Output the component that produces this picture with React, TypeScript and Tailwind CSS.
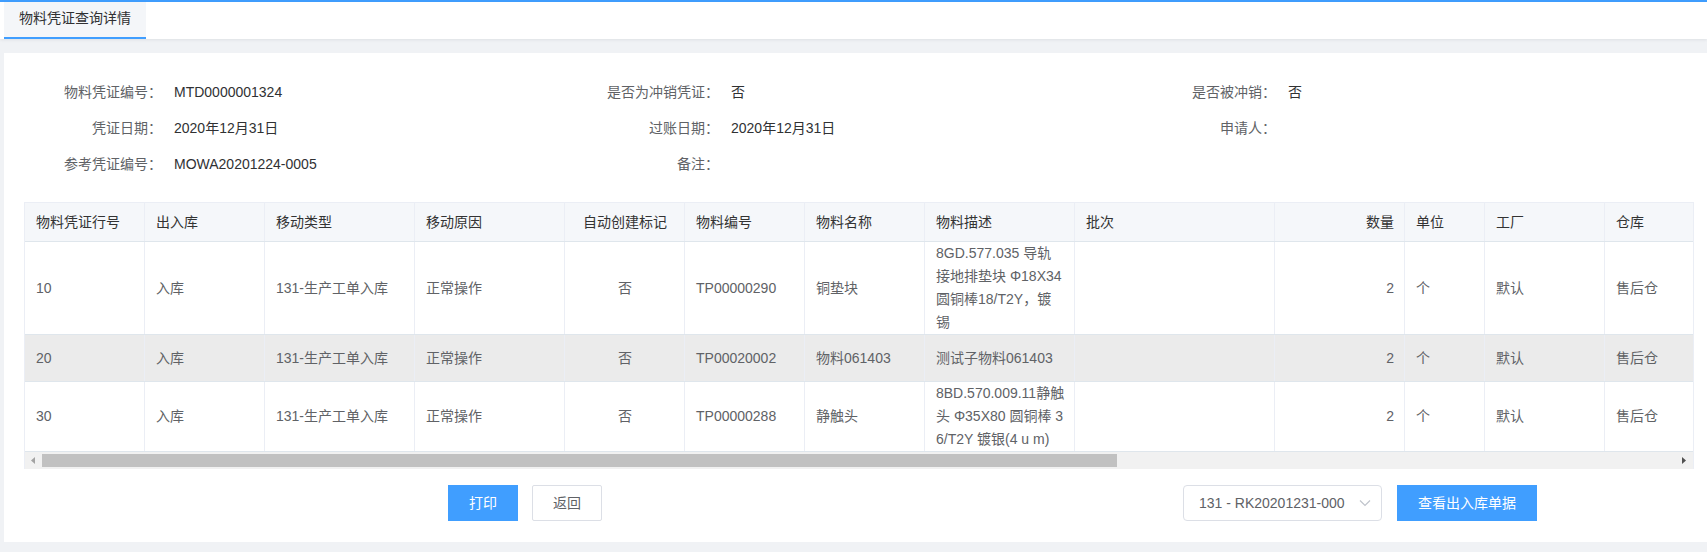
import React from "react";

type Col = { t: string; w: string; align: string };

const cols: Col[] = [
  { t: "物料凭证行号", w: "w-[120px]", align: "justify-start" },
  { t: "出入库", w: "w-[120px]", align: "justify-start" },
  { t: "移动类型", w: "w-[150px]", align: "justify-start" },
  { t: "移动原因", w: "w-[150px]", align: "justify-start" },
  { t: "自动创建标记", w: "w-[120px]", align: "justify-center" },
  { t: "物料编号", w: "w-[120px]", align: "justify-start" },
  { t: "物料名称", w: "w-[120px]", align: "justify-start" },
  { t: "物料描述", w: "w-[150px]", align: "justify-start" },
  { t: "批次", w: "w-[200px]", align: "justify-start" },
  { t: "数量", w: "w-[130px]", align: "justify-end" },
  { t: "单位", w: "w-[80px]", align: "justify-start" },
  { t: "工厂", w: "w-[120px]", align: "justify-start" },
  { t: "仓库", w: "w-[88px]", align: "justify-start" },
];

type Row = { cells: (string | string[])[]; hl?: boolean };

const rows: Row[] = [
  {
    cells: [
      "10",
      "入库",
      "131-生产工单入库",
      "正常操作",
      "否",
      "TP00000290",
      "铜垫块",
      ["8GD.577.035 导轨", "接地排垫块 Φ18X34", "圆铜棒18/T2Y，镀", "锡"],
      "",
      "2",
      "个",
      "默认",
      "售后仓",
    ],
  },
  {
    hl: true,
    cells: [
      "20",
      "入库",
      "131-生产工单入库",
      "正常操作",
      "否",
      "TP00020002",
      "物料061403",
      "测试子物料061403",
      "",
      "2",
      "个",
      "默认",
      "售后仓",
    ],
  },
  {
    cells: [
      "30",
      "入库",
      "131-生产工单入库",
      "正常操作",
      "否",
      "TP00000288",
      "静触头",
      ["8BD.570.009.11静触", "头 Φ35X80 圆铜棒 3", "6/T2Y 镀银(4 u m)"],
      "",
      "2",
      "个",
      "默认",
      "售后仓",
    ],
  },
];

const formItems: [string, string][] = [
  ["物料凭证编号：", "MTD0000001324"],
  ["是否为冲销凭证：", "否"],
  ["是否被冲销：", "否"],
  ["凭证日期：", "2020年12月31日"],
  ["过账日期：", "2020年12月31日"],
  ["申请人：", ""],
  ["参考凭证编号：", "MOWA20201224-0005"],
  ["备注：", ""],
  ["", ""],
];

export default function App() {
  return (
    <div className="h-[552px] w-[1707px] overflow-hidden bg-[#f0f2f5] font-['Liberation_Sans','Noto_Sans_CJK_SC',sans-serif] text-[14px]">
      {/* top bar */}
      <div className="h-[2px] bg-[#409eff]" />
      <div className="relative h-[37px] bg-white shadow-[0_1px_3px_rgba(0,21,41,0.08)]">
        <div className="ml-[4px] flex h-[37px] w-[142px] items-center justify-center border-b-2 border-[#409eff] bg-[#f4f6f9] pb-[2px] text-[#303133]">
          物料凭证查询详情
        </div>
      </div>

      {/* card */}
      <div className="ml-[4px] mt-[14px] h-[489px] bg-white pl-[20px] pt-[21px]">
        {/* form */}
        <div className="grid w-[1671px] grid-cols-3">
          {formItems.map(([label, value], i) => (
            <div key={i} className="flex h-[36px] items-center">
              <div className="w-[150px] shrink-0 pr-[12px] text-right text-[#606266]">{label}</div>
              <div className="text-[#303133]">{value}</div>
            </div>
          ))}
        </div>

        {/* table */}
        <div className="mt-[20px] w-[1670px] overflow-hidden border-l border-r border-t border-[#ebeef5]">
          <div className="w-max">
            <div className="flex border-b border-[#dfe6ec] bg-[#f5f7fa]">
              {cols.map((c, i) => (
                <div
                  key={i}
                  className={`flex h-[38px] shrink-0 items-center border-r border-[#ebeef5] pl-[11px] pr-[10px] text-[#333333] last:border-r-0 ${c.w} ${c.align}`}
                >
                  {c.t}
                </div>
              ))}
            </div>
            {rows.map((r, ri) => (
              <div
                key={ri}
                className={`flex border-b border-[#dfe6ec] ${r.hl ? "bg-[#ebebeb]" : "bg-white"}`}
              >
                {cols.map((c, ci) => {
                  const v = r.cells[ci];
                  return (
                    <div
                      key={ci}
                      className={`flex min-h-[46px] shrink-0 items-center border-r border-[#ebeef5] pl-[11px] pr-[10px] leading-[23px] text-[#606266] last:border-r-0 ${c.w} ${c.align}`}
                    >
                      {Array.isArray(v) ? (
                        <div className="whitespace-nowrap">
                          {v.map((line, li) => (
                            <div key={li}>{line}</div>
                          ))}
                        </div>
                      ) : (
                        <span className="whitespace-nowrap">{v}</span>
                      )}
                    </div>
                  );
                })}
              </div>
            ))}
          </div>
          {/* horizontal scrollbar */}
          <div className="flex h-[17px] items-center bg-[#f1f1f1]">
            <div className="flex h-[17px] w-[17px] shrink-0 items-center justify-center">
              <svg width="5" height="7" viewBox="0 0 5 7">
                <polygon points="4,0 4,7 0,3.5" fill="#a3a3a3" />
              </svg>
            </div>
            <div className="h-[13px] w-[1075px] shrink-0 bg-[#c1c1c1]" />
            <div className="flex-1" />
            <div className="flex h-[17px] w-[17px] shrink-0 items-center justify-center">
              <svg width="5" height="7" viewBox="0 0 5 7">
                <polygon points="0,0 0,7 4,3.5" fill="#505050" />
              </svg>
            </div>
          </div>
        </div>

        {/* bottom actions */}
        <div className="mt-[16px] flex items-center">
          <button className="ml-[424px] flex h-[36px] w-[70px] items-center justify-center bg-[#409eff] text-white">
            打印
          </button>
          <button className="ml-[14px] flex h-[36px] w-[70px] items-center justify-center rounded-[2px] border border-[#dcdfe6] bg-white text-[#606266]">
            返回
          </button>
          <div className="ml-[581px] flex h-[36px] w-[199px] items-center rounded-[4px] border border-[#dcdfe6] bg-white pl-[15px] pr-[10px] text-[#606266]">
            <span className="flex-1 whitespace-nowrap">131 - RK20201231-000</span>
            <svg width="12" height="8" viewBox="0 0 12 8" className="ml-[4px]">
              <polyline points="1,1.5 6,6.5 11,1.5" fill="none" stroke="#c0c4cc" strokeWidth="1.2" />
            </svg>
          </div>
          <button className="ml-[15px] flex h-[36px] w-[140px] items-center justify-center bg-[#409eff] text-white">
            查看出入库单据
          </button>
        </div>
      </div>
    </div>
  );
}
